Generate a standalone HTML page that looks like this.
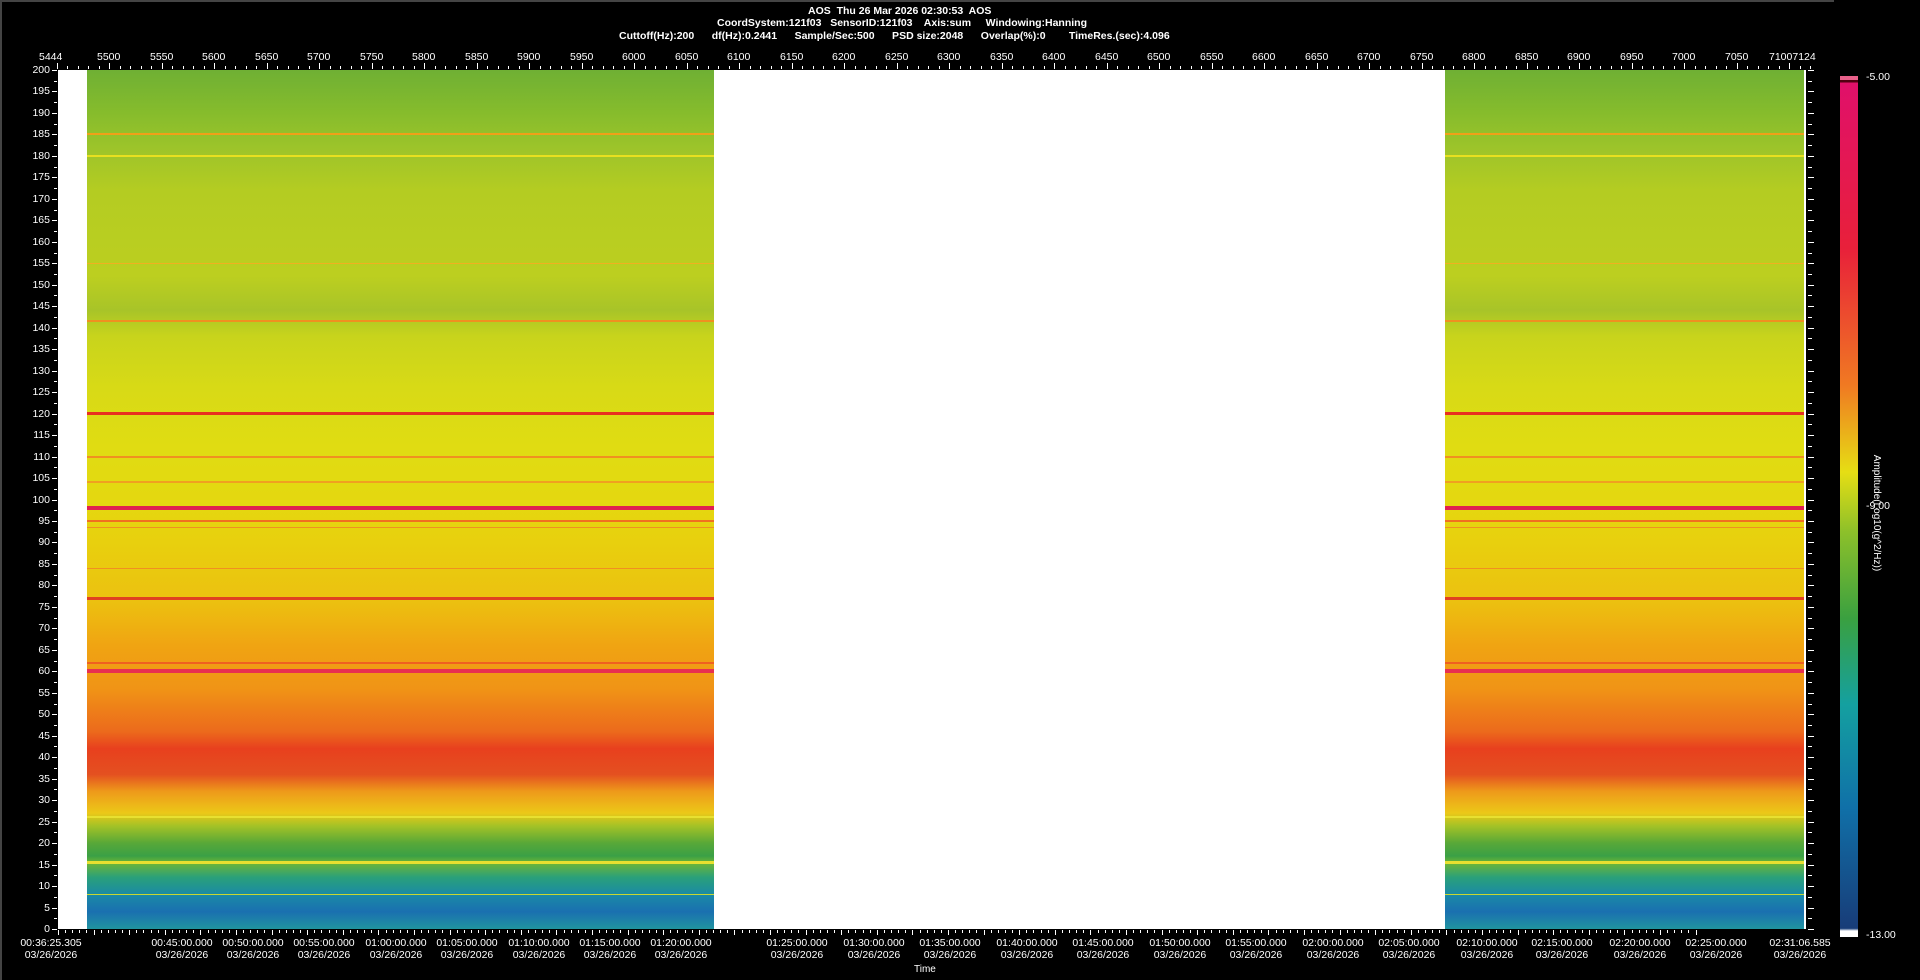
<!DOCTYPE html>
<html><head><meta charset="utf-8"><style>
body{margin:0;width:1920px;height:980px;background:#000;overflow:hidden;position:relative;font-family:"Liberation Sans",sans-serif;color:#fff}
.t{position:absolute;font-size:10.5px;white-space:nowrap;line-height:12px}
.b{font-weight:bold;font-size:10.5px}
.data{position:absolute;top:70px;height:859px;background:linear-gradient(to bottom,#6fb034 0%,#86bc2c 5%,#9cc42a 9%,#b4cc22 14%,#bccf20 24%,#a8c428 28%,#c8d41c 31%,#d8da16 37%,#e0dc12 44%,#e4d810 50%,#e8d00e 55%,#ecc010 62%,#f0a412 67%,#f09416 72%,#ec6a1c 77%,#e8401e 79%,#e45020 82%,#ee9a1a 84%,#ecc818 86.5%,#a4c226 88%,#58a838 90%,#3aa046 91.5%,#6eb636 92.3%,#2aa07a 94%,#1a8aa6 96%,#1a70b0 98%,#2094a0 100%)}
.ln{position:absolute;left:0;right:0}
</style></head><body>
<div style="position:absolute;left:0;top:0;width:1834px;height:2px;background:#444"></div>
<div style="position:absolute;left:0;top:0;width:2px;height:980px;background:#444"></div>
<div class="t b" style="left:808px;top:5px">AOS&nbsp; Thu 26 Mar 2026 02:30:53&nbsp; AOS</div>
<div class="t b" style="left:717px;top:17px">CoordSystem:121f03&nbsp;&nbsp; SensorID:121f03&nbsp;&nbsp;&nbsp; Axis:sum&nbsp;&nbsp;&nbsp;&nbsp; Windowing:Hanning</div>
<div class="t b" style="left:619px;top:30px">Cuttoff(Hz):200&nbsp;&nbsp;&nbsp;&nbsp;&nbsp; df(Hz):0.2441&nbsp;&nbsp;&nbsp;&nbsp;&nbsp; Sample/Sec:500&nbsp;&nbsp;&nbsp;&nbsp;&nbsp; PSD size:2048&nbsp;&nbsp;&nbsp;&nbsp;&nbsp; Overlap(%):0&nbsp;&nbsp;&nbsp;&nbsp;&nbsp;&nbsp;&nbsp; TimeRes.(sec):4.096</div>
<div style="position:absolute;left:58px;top:70px;width:1748px;height:859px;background:#fff"></div>
<div class="data" id="d1" style="left:87px;width:627px"></div>
<div class="data" id="d2" style="left:1445px;width:359px"></div>
<div style="position:absolute;left:1840px;top:76px;width:18px;height:861px;background:linear-gradient(to bottom,#e8608a 0,#e8608a 4px,#500010 4px,#500010 6px,#e0106a 7px,#e8203a 20%,#f07a22 36%,#e6de14 46%,#8cc02a 53%,#3aa040 63%,#14a0a0 73%,#1070a8 85%,#183c78 99%,#fff 99.3%)"></div>
<div class="t" style="left:1866px;top:71px">-5.00</div>
<div class="t" style="left:1866px;top:500px">-9.00</div>
<div class="t" style="left:1866px;top:929px">-13.00</div>
<div class="t" style="left:1816px;top:507px;transform:rotate(90deg);transform-origin:center;width:120px;text-align:center;font-size:10px">Amplitude(Log10(g^2/Hz))</div>
<div class="t" style="left:914px;top:964px;font-size:10px">Time</div>
<div id="ax"></div>
<script>
var h='';
function f2y(f){return 70+(200-f)*859/200}
var lines=[[185,2,'#f0a018'],[180,2,'#e8e020'],[141.5,2,'#f09020'],[155,1,'#f0b020'],[120,3,'#e83020'],[110,2,'#f09020'],[104,2,'#f0a020'],[98,4,'#e02050'],[95,2,'#f07020'],[93.5,1,'#f09020'],[84,1,'#f09020'],[77,3,'#e04020'],[62,2,'#f06020'],[60,4,'#e83050'],[26,2,'#e8e030'],[15.5,3,'#e8e030'],[8,1,'#c8d830']];
['d1','d2'].forEach(function(id){var s='';lines.forEach(function(l){s+='<div class="ln" style="top:'+(f2y(l[0])-70-l[1]/2)+'px;height:'+l[1]+'px;background:'+l[2]+'"></div>'});document.getElementById(id).innerHTML=s});
for(var f=0;f<=200;f+=2.5){var y=f2y(f);var maj=f%5==0;h+='<div style="position:absolute;left:'+(maj?52:54)+'px;top:'+Math.round(y)+'px;width:'+(maj?5:3)+'px;height:1px;background:#fff"></div>';h+='<div style="position:absolute;left:1808px;top:'+Math.round(y)+'px;width:'+(maj?6:4)+'px;height:1px;background:#fff"></div>';if(maj)h+='<div class="t" style="left:0;width:50px;text-align:right;top:'+(Math.round(y)-6)+'px">'+f+'</div>'}
h+='<div class="t" style="left:39px;top:51px">5444</div>';
for(var v=5450;v<=7120;v+=10){var x=109+(v-5500)*52.5/50;var maj=v%50==0;h+='<div style="position:absolute;left:'+Math.round(x)+'px;top:'+(maj?63:66)+'px;width:1px;height:'+(maj?6:3)+'px;background:#fff"></div>';if(maj&&v<7100&&v>5450)h+='<div class="t" style="left:'+(Math.round(x)-12)+'px;top:51px">'+v+'</div>'}
h+='<div class="t" style="left:1769px;top:51px">71007124</div>';
for(var i=0;i<=230;i++){var x=58+i*7.12;if(x>1806)break;h+='<div style="position:absolute;left:'+Math.round(x)+'px;top:930px;width:1px;height:'+(i%5==0?5:3)+'px;background:#fff"></div>'}
var times=['00:45','00:50','00:55','01:00','01:05','01:10','01:15','01:20','01:25','01:30','01:35','01:40','01:45','01:50','01:55','02:00','02:05','02:10','02:15','02:20','02:25'];
var xs=[149,207,265,323,381,440,498,556,651,714,776,839,901,964,1026,1089,1151,1214,1276,1339,1401];
function lab(x,t){h+='<div class="t" style="left:'+(x-50)+'px;width:100px;text-align:center;top:937px">'+t+'<br>03/26/2026</div>'}
lab(51,'00:36:25.305');
times.forEach(function(t,i){lab(Math.round(xs[i]*1.2245),t+':00.000')});
lab(1800,'02:31:06.585');
document.getElementById('ax').innerHTML=h;
</script>
</body></html>
